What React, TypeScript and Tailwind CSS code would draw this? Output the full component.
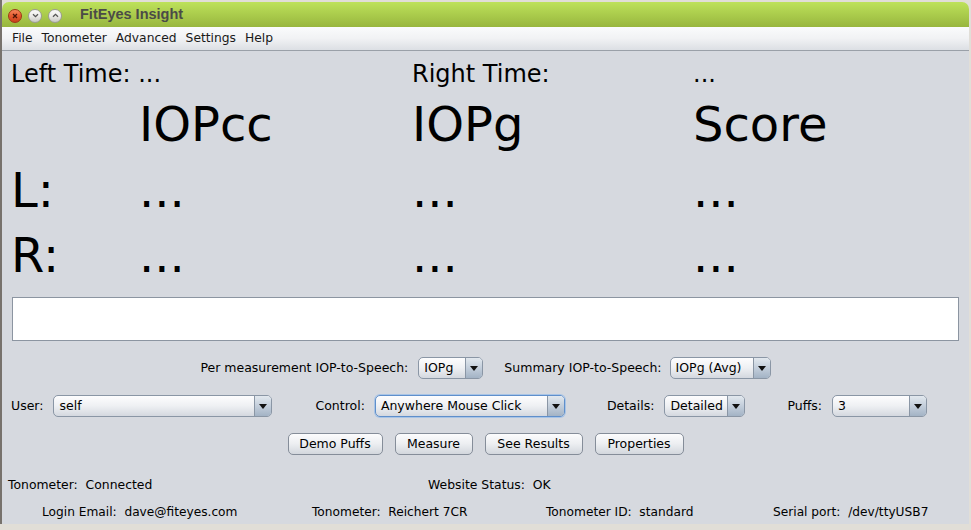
import React from "react";

type ComboProps = {
  value: string;
  width: string;
  focused?: boolean;
};

// Nimbus-style combo box
const Combo = ({ value, width, focused }: ComboProps) => {
  return (
    <div
      className={`flex h-[22px] ${width} rounded-[5px] border overflow-hidden bg-gradient-to-b from-[#fdfdfe] via-[#eef0f3] to-[#d4d8df] ${
        focused ? "border-[#5f8fcb] shadow-[0_0_0_1px_#a8c4e6]" : "border-[#8a96a5]"
      }`}
    >
      <span className="flex-1 pl-[5px] text-[12.5px] leading-[20px] text-black whitespace-pre">{value}</span>
      <span className="w-[17px] flex items-center justify-center border-l border-[#8a96a5] bg-gradient-to-b from-[#e2e8ee] via-[#c3cedb] to-[#a3b3c5]">
        <svg width="8" height="5" viewBox="0 0 8 5">
          <path d="M0 0H8L4 5Z" fill="#111" />
        </svg>
      </span>
    </div>
  );
};

const Button = ({ label, width }: { label: string; width: string }) => {
  return (
    <div
      className={`h-[22px] ${width} flex items-center justify-center rounded-[5px] border border-[#858d99] bg-gradient-to-b from-[#fcfcfd] via-[#eceef1] to-[#d3d7dd] text-[12.5px] text-black`}
    >
      {label}
    </div>
  );
};

const TitleButton = ({ kind }: { kind: "close" | "min" | "max" }) => {
  if (kind === "close") {
    return (
      <div className="w-[14px] h-[14px] rounded-full border border-[#9e3516] bg-gradient-to-b from-[#f4875c] via-[#e55a2e] to-[#c9411b] flex items-center justify-center">
        <svg width="6" height="6" viewBox="0 0 6 6">
          <path d="M1 1L5 5M5 1L1 5" stroke="#4a1406" strokeWidth="1.3" />
        </svg>
      </div>
    );
  }
  return (
    <div className="w-[14px] h-[14px] rounded-full border border-[#9c9c96] bg-gradient-to-b from-[#fbfbfa] via-[#ebebe8] to-[#c9c9c4] flex items-center justify-center">
      <svg width="7" height="5" viewBox="0 0 7 5">
        <path
          d={kind === "min" ? "M1 1.2L3.5 3.7L6 1.2" : "M1 3.8L3.5 1.3L6 3.8"}
          stroke="#555"
          strokeWidth="1.3"
          fill="none"
        />
      </svg>
    </div>
  );
};

export default function App() {
  return (
    <div className="w-[971px] h-[530px] bg-[#e1ded7] overflow-hidden font-['DejaVu_Sans',sans-serif] text-black">
      <div className="flex h-full">
        <div className="w-[2px] h-[524px] bg-[#77726c]" />
        <div className="w-[967px] h-[522px] mt-[2px] flex flex-col">
          {/* Title bar */}
          <div className="h-[25px] rounded-t-[7px] bg-gradient-to-b from-[#bde25a] to-[#98b63e] flex items-center pl-[6px]">
            <div className="flex items-center gap-[6px] mt-[2px]">
              <TitleButton kind="close" />
              <TitleButton kind="min" />
              <TitleButton kind="max" />
            </div>
            <span className="ml-[18px] font-['Liberation_Sans',sans-serif] font-bold text-[14.5px] text-[#4b4b47]">
              FitEyes Insight
            </span>
          </div>

          {/* Menu bar */}
          <div className="h-[24px] border-b border-[#9aa0a8] bg-gradient-to-b from-[#fafbfc] via-[#f1f2f4] to-[#dcdfe4] flex items-center pl-[10px] gap-[9px] text-[12.3px] text-[#1a1a1a]">
            <span>File</span>
            <span>Tonometer</span>
            <span>Advanced</span>
            <span>Settings</span>
            <span>Help</span>
          </div>

          {/* Content */}
          <div className="flex-1 bg-[#d6d9df] flex flex-col">
            <div className="grid grid-cols-[128px_273px_281px_1fr] grid-rows-[33px_66px_66px_65px] pl-[9px] pt-[7px]">
              <div className="col-span-2 text-[24px] leading-[33px]">Left Time: ...</div>
              <div className="text-[24px] leading-[33px]">Right Time:</div>
              <div className="text-[24px] leading-[33px]">...</div>

              <div />
              <div className="text-[48px] leading-[66px]">IOPcc</div>
              <div className="text-[48px] leading-[66px]">IOPg</div>
              <div className="text-[48px] leading-[66px]">Score</div>

              <div className="text-[48px] leading-[66px]">L:</div>
              <div className="text-[48px] leading-[66px]">...</div>
              <div className="text-[48px] leading-[66px]">...</div>
              <div className="text-[48px] leading-[66px]">...</div>

              <div className="text-[48px] leading-[65px]">R:</div>
              <div className="text-[48px] leading-[65px]">...</div>
              <div className="text-[48px] leading-[65px]">...</div>
              <div className="text-[48px] leading-[65px]">...</div>
            </div>

            <div className="mx-[10px] mt-[9px] h-[44px] bg-white border border-[#8c95a1]" />

            {/* Speech options */}
            <div className="mt-[16px] flex items-center justify-center text-[12.5px]">
              <span>Per measurement IOP-to-Speech:</span>
              <div className="ml-[10px]">
                <Combo value="IOPg" width="w-[65px]" />
              </div>
              <span className="ml-[21px]">Summary IOP-to-Speech:</span>
              <div className="ml-[8px]">
                <Combo value="IOPg (Avg)" width="w-[101px]" />
              </div>
            </div>

            {/* User / control row */}
            <div className="mt-[16px] flex items-center pl-[9px] text-[12.5px]">
              <span>User:</span>
              <div className="ml-[10px]">
                <Combo value="self" width="w-[219px]" />
              </div>
              <span className="ml-[43px]">Control:</span>
              <div className="ml-[10px]">
                <Combo value="Anywhere Mouse Click" width="w-[190px]" focused />
              </div>
              <span className="ml-[42px]">Details:</span>
              <div className="ml-[10px]">
                <Combo value="Detailed" width="w-[81px]" />
              </div>
              <span className="ml-[42px]">Puffs:</span>
              <div className="ml-[10px]">
                <Combo value="3" width="w-[95px]" />
              </div>
            </div>

            {/* Buttons */}
            <div className="mt-[16px] flex justify-center gap-[12px]">
              <Button label="Demo Puffs" width="w-[95px]" />
              <Button label="Measure" width="w-[78px]" />
              <Button label="See Results" width="w-[98px]" />
              <Button label="Properties" width="w-[89px]" />
            </div>

            {/* Status */}
            <div className="mt-[22px] grid grid-cols-[420px_1fr] pl-[6px] text-[12.4px] leading-[16px] whitespace-pre">
              <span>Tonometer:  Connected</span>
              <span>Website Status:  OK</span>
            </div>
            <div className="mt-[11px] grid grid-cols-[270px_234px_227px_1fr] pl-[40px] text-[12.2px] leading-[16px] whitespace-pre">
              <span>Login Email:  dave@fiteyes.com</span>
              <span>Tonometer:  Reichert 7CR</span>
              <span>Tonometer ID:  standard</span>
              <span>Serial port:  /dev/ttyUSB7</span>
            </div>
          </div>
        </div>
      </div>
    </div>
  );
}
